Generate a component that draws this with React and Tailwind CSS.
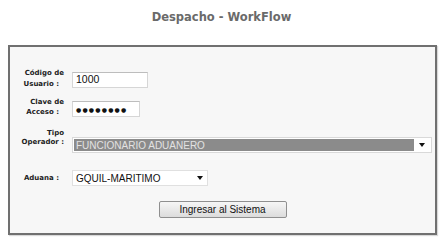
import React from 'react';

// Login panel for "Despacho - WorkFlow"

const labelFont = { fontFamily: '"DejaVu Sans", Verdana, sans-serif' };
const fieldFont = { fontFamily: '"Liberation Sans", Arial, sans-serif' };

function Arrow() {
  return (
    <svg width="6" height="4" viewBox="0 0 6 4" className="block">
      <path d="M0 0 H6 L3 4 Z" fill="#111" />
    </svg>
  );
}

export default function App() {
  return (
    <div className="w-[443px] h-[244px] bg-white overflow-hidden">
      <div
        className="pt-[10px] h-[45px] text-center text-[11.5px] leading-[14px] font-bold text-[#6a6a6a]"
        style={labelFont}
      >
        Despacho - WorkFlow
      </div>

      <div className="ml-[8px] w-[429px] h-[190px] border-2 border-[#707070] bg-[#f7f7f7] shadow-[1px_1px_1px_rgba(0,0,0,0.15)]">
        {/* Código de Usuario */}
        <div className="mt-[20px] flex items-start">
          <div
            className="w-[54px] mt-[1px] text-right text-[7px] leading-[11px] font-bold text-[#222]"
            style={labelFont}
          >
            <div>Código de</div>
            <div className="pr-[5px]">Usuario :</div>
          </div>
          <div
            className="ml-[8px] mt-[5px] w-[76px] h-[16px] bg-white border border-[#d6d6d6] border-t-[#bdbdbd] flex items-center pl-[3px] text-[10.5px] text-[#111]"
            style={fieldFont}
          >
            1000
          </div>
        </div>

        {/* Clave de Acceso */}
        <div className="mt-[7px] flex items-start">
          <div
            className="w-[54px] text-right text-[7px] leading-[10px] font-bold text-[#222]"
            style={labelFont}
          >
            <div>Clave de</div>
            <div className="pr-[5px]">Acceso :</div>
          </div>
          <div
            className="ml-[8px] mt-[4px] w-[68px] h-[16px] bg-white border border-[#d6d6d6] border-t-[#bdbdbd] flex items-center pl-[3px] text-[6px] tracking-[1.2px] text-[#111]"
            style={labelFont}
          >
            ●●●●●●●●
          </div>
        </div>

        {/* Tipo Operador */}
        <div className="mt-[12px] flex items-start">
          <div
            className="w-[54px] text-right text-[7px] leading-[9px] font-bold text-[#222]"
            style={labelFont}
          >
            <div>Tipo</div>
            <div>Operador :</div>
          </div>
          <div className="ml-[8px] mt-[8px] w-[360px] h-[16px] bg-white border border-[#d9d9d9] flex items-center p-[1px]">
            <div
              className="flex-1 h-full bg-[#8b8b8b] flex items-center pl-[2px] text-[10px] text-[#e2e2e2]"
              style={fieldFont}
            >
              FUNCIONARIO ADUANERO
            </div>
            <div className="w-[16px] flex justify-center">
              <Arrow />
            </div>
          </div>
        </div>

        {/* Aduana */}
        <div className="mt-[17px] flex items-center">
          <div
            className="w-[54px] pr-[5px] text-right text-[7px] leading-[16px] font-bold text-[#222]"
            style={labelFont}
          >
            Aduana :
          </div>
          <div className="ml-[8px] w-[136px] h-[16px] bg-white border border-[#e0e0e0] flex items-center">
            <div className="flex-1 pl-[3px] text-[10px] text-[#111]" style={fieldFont}>
              GQUIL-MARITIMO
            </div>
            <div className="w-[14px] flex justify-center">
              <Arrow />
            </div>
          </div>
        </div>

        {/* Ingresar */}
        <div className="mt-[15px] flex justify-center">
          <button
            type="button"
            className="w-[128px] h-[17px] rounded-[2px] border border-[#8f8f8f] bg-gradient-to-b from-[#f6f6f6] to-[#dcdcdc] text-[10px] leading-none text-[#111]"
            style={fieldFont}
          >
            Ingresar al Sistema
          </button>
        </div>
      </div>
    </div>
  );
}
